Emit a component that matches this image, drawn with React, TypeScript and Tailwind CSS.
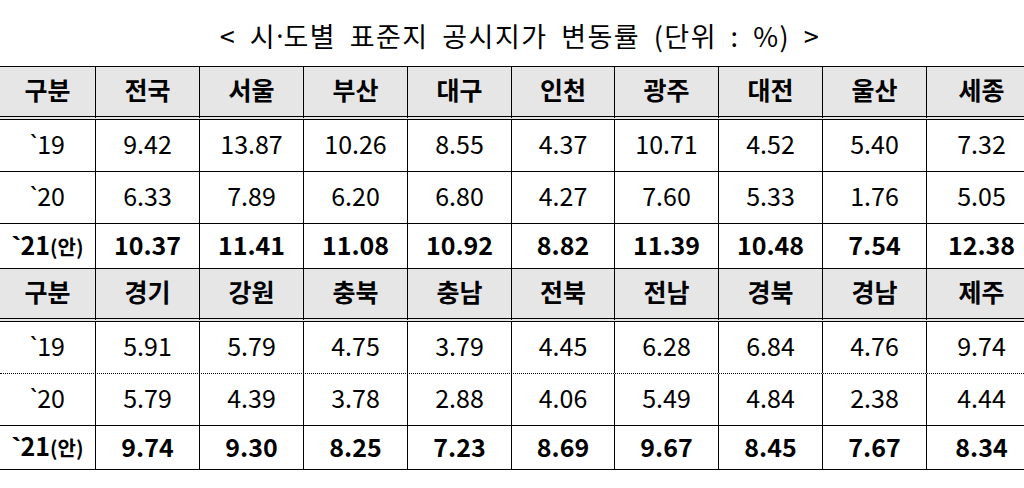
import React from 'react'

// 시·도별 표준지 공시지가 변동률 표
const COLS = ['w-[95px]', 'w-[104px]', 'w-[104px]', 'w-[104px]', 'w-[104px]', 'w-[103px]', 'w-[104px]', 'w-[104px]', 'w-[104px]', 'w-[110px]']

type Block = {
  regions: string[]
  r19: string[]
  r20: string[]
  r21: string[]
  dotted: boolean
}

const BLOCKS: Block[] = [
  {
    regions: ['전국', '서울', '부산', '대구', '인천', '광주', '대전', '울산', '세종'],
    r19: ['9.42', '13.87', '10.26', '8.55', '4.37', '10.71', '4.52', '5.40', '7.32'],
    r20: ['6.33', '7.89', '6.20', '6.80', '4.27', '7.60', '5.33', '1.76', '5.05'],
    r21: ['10.37', '11.41', '11.08', '10.92', '8.82', '11.39', '10.48', '7.54', '12.38'],
    dotted: false
  },
  {
    regions: ['경기', '강원', '충북', '충남', '전북', '전남', '경북', '경남', '제주'],
    r19: ['5.91', '5.79', '4.75', '3.79', '4.45', '6.28', '6.84', '4.76', '9.74'],
    r20: ['5.79', '4.39', '3.78', '2.88', '4.06', '5.49', '4.84', '2.38', '4.44'],
    r21: ['9.74', '9.30', '8.25', '7.23', '8.69', '9.67', '8.45', '7.67', '8.34'],
    dotted: true
  }
]

const Row: React.FC<{
  cells: React.ReactNode[]
  className: string
  cellClass?: string
}> = ({ cells, className, cellClass = '' }) => (
  <div className={`flex ${className}`}>
    {cells.map((c, i) => (
      <div
        key={i}
        className={`${COLS[i]} shrink-0 flex items-center justify-center ${i > 0 ? 'border-l border-black' : ''} ${cellClass}`}
      >
        {c}
      </div>
    ))}
  </div>
)

// 연도 라벨 (백틱은 라틴 폰트로)
const Year: React.FC<{ y: string; bold?: boolean }> = ({ y, bold }) => (
  <span className={bold ? 'font-bold' : ''}>
    <span style={{ fontFamily: '"Noto Sans", sans-serif' }}>`</span>
    {y}
    {bold && <span className="text-[20px] font-semibold">(안)</span>}
  </span>
)

const App: React.FC = () => {
  return (
    <div
      className="w-[1024px] h-[488px] overflow-hidden bg-white text-black"
      style={{ fontFamily: '"Noto Sans CJK KR", "Noto Sans", sans-serif' }}
    >
      {/* Title */}
      <div className="h-[66px] flex items-center justify-center pt-[6px] pl-[16px] text-[27px] tracking-[1.5px] [word-spacing:6px]">
        &lt; 시<span className="tracking-normal" style={{ fontFamily: '"Noto Sans", sans-serif' }}>·</span>도별 표준지 공시지가 변동률 (단위 : %) &gt;
      </div>

      <div className="w-[1040px]">
        {BLOCKS.map((b, bi) => (
          <div key={bi}>
            {/* Header */}
            <Row
              cells={['구분', ...b.regions]}
              className="border-t border-black h-[54px] text-[25px] font-bold"
              cellClass="bg-[#e6e6e6] h-full border-b-4 border-b-black border-double pb-[3px]"
            />
            <Row
              cells={[<Year key="y" y="19" />, ...b.r19]}
              className={`h-[52px] text-[25px] ${b.dotted ? 'border-b border-dotted border-black' : 'border-b border-black'}`}
              cellClass="pb-[3px]"
            />
            <Row
              cells={[<Year key="y" y="20" />, ...b.r20]}
              className="h-[52px] text-[25px] border-b border-black"
              cellClass="pb-[3px]"
            />
            <Row
              cells={[<Year key="y" y="21" bold />, ...b.r21]}
              className={`h-[44px] text-[25px] font-bold ${bi === 1 ? 'border-b border-black' : ''}`}
              cellClass="pb-[2px]"
            />
          </div>
        ))}
      </div>
    </div>
  )
}

export default App
